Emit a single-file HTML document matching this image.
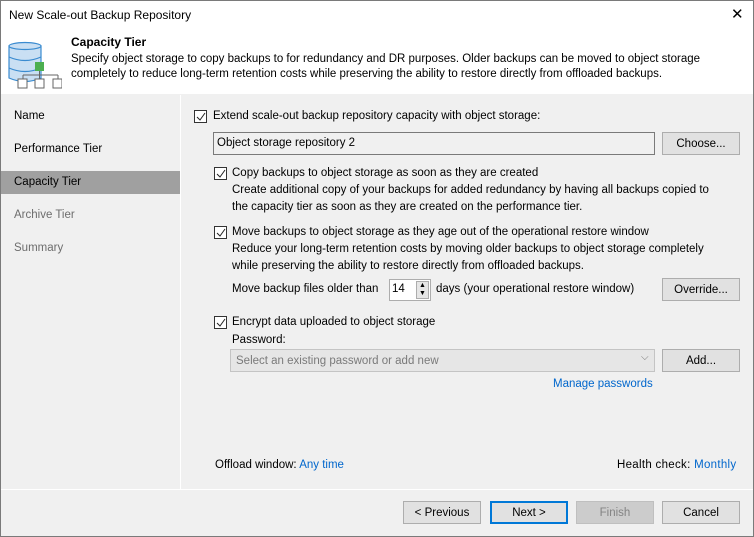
<!DOCTYPE html>
<html><head><style>
*{margin:0;padding:0;box-sizing:border-box}
body{width:754px;height:537px;background:#f0f0f0;font-family:"Liberation Sans",sans-serif;font-size:11.5px;color:#000;position:relative;overflow:hidden}
.a{position:absolute;white-space:nowrap}
.win{position:absolute;left:0;top:0;width:754px;height:537px;border:1px solid #7a7a7a}
.cb{position:absolute;width:13px;height:13px;border:1px solid #333;background:#fff}
.cb svg{position:absolute;left:1px;top:1px}
.btn{position:absolute;height:23px;background:#e1e1e1;border:1px solid #adadad;text-align:center;line-height:22px}
.link{color:#0066cc}
.gray{color:#6d6d6d}
</style></head><body>
<div class="win"></div>
<div class="a" style="left:1px;top:1px;width:752px;height:93px;background:#fff"></div>
<div class="a" style="left:9px;top:8px;font-size:12px">New Scale-out Backup Repository</div>
<div class="a" style="left:731px;top:5px;font-size:15px">✕</div>
<svg class="a" style="left:6px;top:40px" width="56" height="50">
<path d="M3 6V38Q19 45 35 38V6Z" fill="#c9dff3" stroke="#3a8bd0" stroke-width="1.2"/>
<path d="M3 17Q19 24 35 17M3 28Q19 35 35 28" fill="none" stroke="#3a8bd0" stroke-width="1.2"/>
<ellipse cx="19" cy="6" rx="16" ry="3.5" fill="#c9dff3" stroke="#3a8bd0" stroke-width="1.2"/>
<rect x="29" y="22" width="9" height="9" fill="#4caf50"/>
<path d="M33.5 31v4M17 35h35M17 35v4M33.5 35v4M52 35v4" stroke="#666" fill="none"/>
<rect x="12" y="39" width="9" height="9" fill="#fff" stroke="#666"/>
<rect x="29" y="39" width="9" height="9" fill="#fff" stroke="#666"/>
<rect x="47" y="39" width="9" height="9" fill="#fff" stroke="#666"/>
</svg>
<div class="a" style="left:71px;top:35px;font-weight:bold;font-size:12px">Capacity Tier</div>
<div class="a" style="left:71px;top:53px">Specify object storage to copy backups to for redundancy and DR purposes. Older backups can be moved to object storage</div>
<div class="a" style="left:71px;top:68px">completely to reduce long-term retention costs while preserving the ability to restore directly from offloaded backups.</div>
<div class="a" style="left:180px;top:95px;width:1px;height:394px;background:#fff"></div>
<div class="a" style="left:1px;top:489px;width:752px;height:1px;background:#fff"></div>
<div class="a" style="left:14px;top:110px">Name</div>
<div class="a" style="left:14px;top:143px">Performance Tier</div>
<div class="a" style="left:1px;top:171px;width:179px;height:23px;background:#a0a0a0"></div>
<div class="a" style="left:14px;top:176px">Capacity Tier</div>
<div class="a gray" style="left:14px;top:209px">Archive Tier</div>
<div class="a gray" style="left:14px;top:242px">Summary</div>

<div class="cb" style="left:194px;top:110px"><svg width="10" height="10"><path d="M1 5l3 3 5-7" stroke="#222" fill="none"/></svg></div>
<div class="a" style="left:213px;top:110px">Extend scale-out backup repository capacity with object storage:</div>
<div class="a" style="left:213px;top:132px;width:442px;height:23px;border:1px solid #7a7a7a;background:#f0f0f0;padding:4px 3px;">Object storage repository 2</div>
<div class="btn" style="left:662px;top:132px;width:78px">Choose...</div>

<div class="cb" style="left:214px;top:167px"><svg width="10" height="10"><path d="M1 5l3 3 5-7" stroke="#222" fill="none"/></svg></div>
<div class="a" style="left:232px;top:167px">Copy backups to object storage as soon as they are created</div>
<div class="a" style="left:232px;top:184px">Create additional copy of your backups for added redundancy by having all backups copied to</div>
<div class="a" style="left:232px;top:201px">the capacity tier as soon as they are created on the performance tier.</div>

<div class="cb" style="left:214px;top:226px"><svg width="10" height="10"><path d="M1 5l3 3 5-7" stroke="#222" fill="none"/></svg></div>
<div class="a" style="left:232px;top:226px">Move backups to object storage as they age out of the operational restore window</div>
<div class="a" style="left:232px;top:243px">Reduce your long-term retention costs by moving older backups to object storage completely</div>
<div class="a" style="left:232px;top:260px">while preserving the ability to restore directly from offloaded backups.</div>
<div class="a" style="left:232px;top:283px">Move backup files older than</div>
<div class="a" style="left:389px;top:279px;width:42px;height:22px;border:1px solid #adadad;background:#fff;padding:3px 2px">14</div>
<div class="a" style="left:416px;top:281px;width:13px;height:18px;background:#e6e6e6;border:1px solid #adadad;font-size:7px;line-height:8px;text-align:center">▲<br>▼</div>
<div class="a" style="left:436px;top:283px">days (your operational restore window)</div>
<div class="btn" style="left:662px;top:278px;width:78px">Override...</div>

<div class="cb" style="left:214px;top:316px"><svg width="10" height="10"><path d="M1 5l3 3 5-7" stroke="#222" fill="none"/></svg></div>
<div class="a" style="left:232px;top:316px">Encrypt data uploaded to object storage</div>
<div class="a" style="left:232px;top:334px">Password:</div>
<div class="a" style="left:230px;top:349px;width:425px;height:23px;border:1px solid #c4c4c4;background:#e6e6e6;padding:5px 5px;color:#7a7a7a">Select an existing password or add new</div>
<div class="a" style="left:641px;top:352px;color:#777;font-size:10px">⌵</div>
<div class="btn" style="left:662px;top:349px;width:78px">Add...</div>
<div class="a link" style="left:553px;top:378px">Manage passwords</div>

<div class="a" style="left:215px;top:459px">Offload window: <span class="link">Any time</span></div>
<div class="a" style="left:617px;top:459px;letter-spacing:0.3px">Health check: <span class="link">Monthly</span></div>

<div class="btn" style="left:403px;top:501px;width:78px">&lt; Previous</div>
<div class="btn" style="left:490px;top:501px;width:78px;border:2px solid #0078d7;line-height:20px">Next &gt;</div>
<div class="btn" style="left:576px;top:501px;width:78px;background:#cccccc;border-color:#bfbfbf;color:#838383">Finish</div>
<div class="btn" style="left:662px;top:501px;width:78px">Cancel</div>
</body></html>
